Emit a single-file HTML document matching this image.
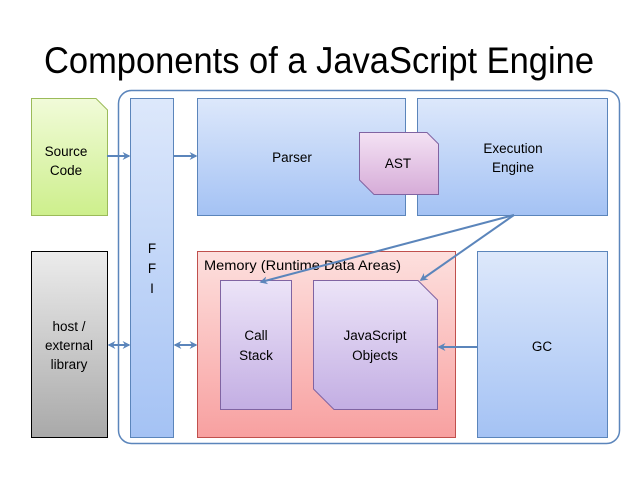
<!DOCTYPE html>
<html><head><meta charset="utf-8"><style>
html,body{margin:0;padding:0;background:#fff;width:638px;height:479px;overflow:hidden}
svg{display:block}
text{font-family:"Liberation Sans",sans-serif;}
</style></head><body>
<svg width="638" height="479" viewBox="0 0 638 479" xmlns="http://www.w3.org/2000/svg">
<defs>
<linearGradient id="blue" x1="0" y1="0" x2="0" y2="1"><stop offset="0" stop-color="#dde8fb"/><stop offset="1" stop-color="#a4c2f4"/></linearGradient>
<linearGradient id="green" x1="0" y1="0" x2="0" y2="1"><stop offset="0" stop-color="#f1fbd9"/><stop offset="1" stop-color="#cdef8c"/></linearGradient>
<linearGradient id="gray" x1="0" y1="0" x2="0" y2="1"><stop offset="0" stop-color="#ececec"/><stop offset="1" stop-color="#a9a9a9"/></linearGradient>
<linearGradient id="red" x1="0" y1="0" x2="0" y2="1"><stop offset="0" stop-color="#fde0de"/><stop offset="1" stop-color="#f8a0a0"/></linearGradient>
<linearGradient id="purp" x1="0" y1="0" x2="0" y2="1"><stop offset="0" stop-color="#ece4f8"/><stop offset="1" stop-color="#c3aee3"/></linearGradient>
<linearGradient id="pink" x1="0" y1="0" x2="0" y2="1"><stop offset="0" stop-color="#f4e2f4"/><stop offset="1" stop-color="#d6acd8"/></linearGradient>
<marker id="ah" viewBox="0 0 10 10" refX="8" refY="5" markerWidth="4" markerHeight="4" orient="auto-start-reverse"><path d="M0,0 L10,5 L0,10 L3,5 Z" fill="#5b85bb"/></marker>
</defs>
<text x="319" y="73" font-size="37" text-anchor="middle" textLength="550" lengthAdjust="spacingAndGlyphs" fill="#000">Components of a JavaScript Engine</text>

<rect x="118.5" y="90.5" width="501" height="353" rx="13" fill="none" stroke="#5b85bb" stroke-width="1.5"/>

<path d="M31.5,98.5 H96 L107.5,110 V215.5 H31.5 Z" fill="url(#green)" stroke="#9bbb59"/>
<text font-size="13.5" text-anchor="middle"><tspan x="66" y="156">Source</tspan><tspan x="66" y="175">Code</tspan></text>

<rect x="130.5" y="98.5" width="43" height="339" fill="url(#blue)" stroke="#5b85bb"/>
<text font-size="13.5" text-anchor="middle"><tspan x="152" y="253">F</tspan><tspan x="152" y="273">F</tspan><tspan x="152" y="293">I</tspan></text>

<rect x="197.5" y="98.5" width="208" height="117" fill="url(#blue)" stroke="#5b85bb"/>
<text x="292" y="162" font-size="13.5" text-anchor="middle">Parser</text>

<rect x="417.5" y="98.5" width="190" height="117" fill="url(#blue)" stroke="#5b85bb"/>
<text font-size="13.5" text-anchor="middle"><tspan x="513" y="153">Execution</tspan><tspan x="513" y="172">Engine</tspan></text>

<path d="M359.5,132.5 H427 L438.5,144 V194.5 H374 L359.5,180 Z" fill="url(#pink)" stroke="#8064a2"/>
<text x="398" y="168" font-size="13.5" text-anchor="middle">AST</text>

<rect x="31.5" y="251.5" width="76" height="186" fill="url(#gray)" stroke="#000"/>
<text font-size="13.5" text-anchor="middle"><tspan x="69" y="331">host /</tspan><tspan x="69" y="350">external</tspan><tspan x="69" y="369">library</tspan></text>

<rect x="197.5" y="251.5" width="258" height="186" fill="url(#red)" stroke="#c0504d"/>
<text x="204" y="270" font-size="14" textLength="197" lengthAdjust="spacingAndGlyphs">Memory (Runtime Data Areas)</text>

<rect x="220.5" y="280.5" width="71" height="129" fill="url(#purp)" stroke="#8064a2"/>
<text font-size="13.5" text-anchor="middle"><tspan x="256" y="340">Call</tspan><tspan x="256" y="360">Stack</tspan></text>

<path d="M313.5,280.5 H418 L437.5,300 V409.5 H334 L313.5,389 Z" fill="url(#purp)" stroke="#8064a2"/>
<text font-size="13.5" text-anchor="middle"><tspan x="375" y="340">JavaScript</tspan><tspan x="375" y="360">Objects</tspan></text>

<rect x="477.5" y="251.5" width="130" height="186" fill="url(#blue)" stroke="#5b85bb"/>
<text x="542" y="351" font-size="13.5" text-anchor="middle">GC</text>

<g stroke="#5b85bb" stroke-width="2" fill="none">
<line x1="107" y1="156" x2="129" y2="156" marker-end="url(#ah)"/>
<line x1="174" y1="156" x2="196" y2="156" marker-end="url(#ah)"/>
<line x1="109" y1="345" x2="129" y2="345" marker-end="url(#ah)" marker-start="url(#ah)"/>
<line x1="175" y1="345" x2="196" y2="345" marker-end="url(#ah)" marker-start="url(#ah)"/>
<line x1="477" y1="347" x2="439" y2="347" marker-end="url(#ah)"/>
<line x1="514" y1="215" x2="261" y2="282" marker-end="url(#ah)"/>
<line x1="514" y1="215" x2="421" y2="280" marker-end="url(#ah)"/>
</g>
</svg>
</body></html>
